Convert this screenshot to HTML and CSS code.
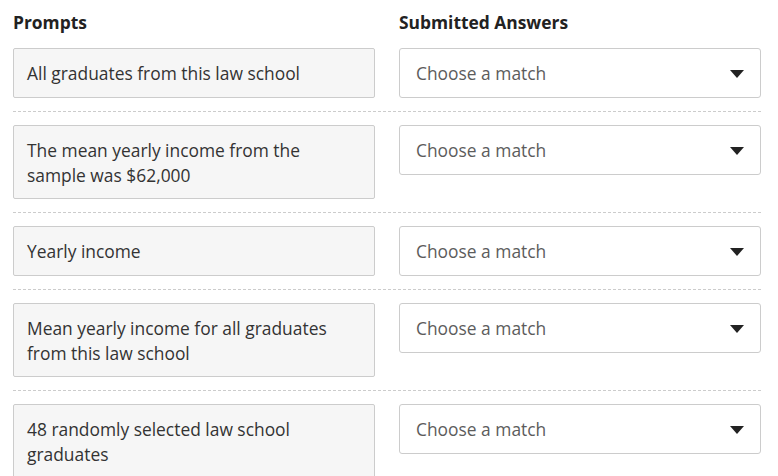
FILE: index.html
```html
<!DOCTYPE html>
<html lang="en">
<head>
<meta charset="utf-8">
<title>Matching</title>
<link rel="stylesheet" href="styles.css">
</head>
<body>
<div class="matching">
  <div class="head">
    <div class="col-title">Prompts</div>
    <div class="col-title">Submitted Answers</div>
  </div>
  <div class="row">
    <div class="prompt">All graduates from this law school</div>
    <div class="select"><span class="placeholder">Choose a match</span><span class="caret"></span></div>
  </div>
  <div class="row">
    <div class="prompt">The mean yearly income from the sample was $62,000</div>
    <div class="select"><span class="placeholder">Choose a match</span><span class="caret"></span></div>
  </div>
  <div class="row">
    <div class="prompt">Yearly income</div>
    <div class="select"><span class="placeholder">Choose a match</span><span class="caret"></span></div>
  </div>
  <div class="row">
    <div class="prompt">Mean yearly income for all graduates from this law school</div>
    <div class="select"><span class="placeholder">Choose a match</span><span class="caret"></span></div>
  </div>
  <div class="row">
    <div class="prompt">48 randomly selected law school graduates</div>
    <div class="select"><span class="placeholder">Choose a match</span><span class="caret"></span></div>
  </div>
</div>
</body>
</html>
```
FILE: styles.css
```css
html, body {
  margin: 0;
  padding: 0;
  background: #ffffff;
}
body {
  font-family: "Open Sans", "Liberation Sans", sans-serif;
  font-size: 17.4px;
  color: #333333;
}
.matching {
  width: 748px;
  margin-left: 13px;
  padding-top: 10px;
}
.head {
  display: grid;
  grid-template-columns: 362px 362px;
  column-gap: 24px;
  margin-bottom: 14px;
}
.col-title {
  font-weight: 700;
  line-height: 24px;
  color: #222222;
}
.row {
  display: grid;
  grid-template-columns: 362px 362px;
  column-gap: 24px;
  align-items: start;
  padding: 13px 0;
  border-bottom: 1px dashed #cccccc;
}
.head + .row {
  padding-top: 0;
}
.prompt {
  background: #f6f6f6;
  border: 1px solid #cccccc;
  border-radius: 2px;
  padding: 12px 13px 11px;
  min-height: 25px;
  line-height: 24.5px;
  color: #333333;
}
.select {
  display: flex;
  align-items: center;
  justify-content: space-between;
  background: #ffffff;
  border: 1px solid #cccccc;
  border-radius: 3px;
  padding: 12px 16px 11px 16px;
  line-height: 25px;
}
.placeholder {
  color: #5c5c5c;
}
.caret {
  width: 0;
  height: 0;
  border-left: 7px solid transparent;
  border-right: 7px solid transparent;
  border-top: 8px solid #222222;
}
```
